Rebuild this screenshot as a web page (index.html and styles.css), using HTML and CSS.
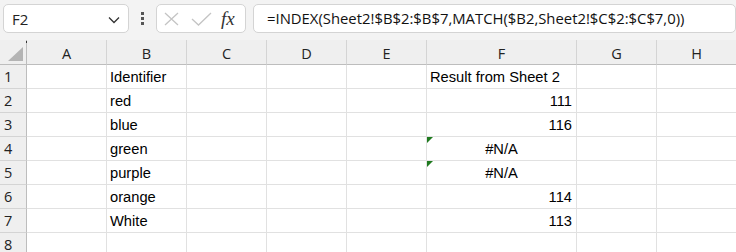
FILE: index.html
```html
<!DOCTYPE html>
<html>
<head>
<meta charset="utf-8">
<link rel="stylesheet" href="styles.css">
</head>
<body>
<div class="app">
  <div class="toolbar">
    <div class="namebox">
      <span class="name">F2</span>
      <svg class="chev" width="12" height="8" viewBox="0 0 12 8"><path d="M1 1.5 L6 6.5 L11 1.5" fill="none" stroke="#333" stroke-width="1.3"/></svg>
    </div>
    <div class="vdots"><i></i><i></i><i></i></div>
    <div class="fxbox">
      <svg width="18" height="14" viewBox="0 0 18 14"><path d="M2 1 L15 13 M15 1 L2 13" stroke="#c4c4c4" stroke-width="1.3" fill="none"/></svg>
      <svg width="22" height="14" viewBox="0 0 22 14"><path d="M1 7 L7.5 13 L20 1" stroke="#c4c4c4" stroke-width="1.3" fill="none"/></svg>
      <span class="fx">fx</span>
    </div>
    <div class="formula">=INDEX(Sheet2!$B$2:$B$7,MATCH($B2,Sheet2!$C$2:$C$7,0))</div>
  </div>
  <div class="grid">
    <div class="corner"><span class="tri"></span><span class="dot"></span></div>
    <div class="ch">A</div><div class="ch">B</div><div class="ch">C</div><div class="ch">D</div><div class="ch">E</div><div class="ch">F</div><div class="ch">G</div><div class="ch">H</div>

    <div class="rh">1</div><div class="c"></div><div class="c">Identifier</div><div class="c"></div><div class="c"></div><div class="c"></div><div class="c">Result from Sheet 2</div><div class="c"></div><div class="c"></div>
    <div class="rh">2</div><div class="c"></div><div class="c">red</div><div class="c"></div><div class="c"></div><div class="c"></div><div class="c num">111</div><div class="c"></div><div class="c"></div>
    <div class="rh">3</div><div class="c"></div><div class="c">blue</div><div class="c"></div><div class="c"></div><div class="c"></div><div class="c num">116</div><div class="c"></div><div class="c"></div>
    <div class="rh">4</div><div class="c"></div><div class="c">green</div><div class="c"></div><div class="c"></div><div class="c"></div><div class="c err"><span class="flag"></span>#N/A</div><div class="c"></div><div class="c"></div>
    <div class="rh">5</div><div class="c"></div><div class="c">purple</div><div class="c"></div><div class="c"></div><div class="c"></div><div class="c err"><span class="flag"></span>#N/A</div><div class="c"></div><div class="c"></div>
    <div class="rh">6</div><div class="c"></div><div class="c">orange</div><div class="c"></div><div class="c"></div><div class="c"></div><div class="c num">114</div><div class="c"></div><div class="c"></div>
    <div class="rh">7</div><div class="c"></div><div class="c">White</div><div class="c"></div><div class="c"></div><div class="c"></div><div class="c num">113</div><div class="c"></div><div class="c"></div>
    <div class="rh">8</div><div class="c"></div><div class="c"></div><div class="c"></div><div class="c"></div><div class="c"></div><div class="c"></div><div class="c"></div><div class="c"></div>
  </div>
</div>
</body>
</html>
```
FILE: styles.css
```css
* { box-sizing: border-box; }
html, body { margin: 0; padding: 0; }
body { width: 736px; height: 252px; overflow: hidden; background: #fff; font-family: "Open Sans", "Noto Sans", sans-serif; }
.app { width: 736px; }
.toolbar {
  height: 40px; background: #f3f3f3; display: flex; align-items: flex-start;
  padding: 4px 0 0 3px;
}
.namebox {
  width: 126px; height: 29px; background: #fff; border: 1px solid #d4d4d4; border-radius: 5px;
  display: flex; align-items: center; justify-content: space-between; padding: 0 8px 0 8px;
  font-size: 15px; color: #222;
}
.chev { margin-top: 2px; }
.vdots { width: 27px; height: 29px; display: flex; flex-direction: column; align-items: center; justify-content: center; gap: 2px; }
.vdots i { display: block; width: 3px; height: 3px; background: #555; }
.fxbox {
  width: 90px; height: 29px; background: #fff; border: 1px solid #d4d4d4; border-radius: 5px;
  display: flex; align-items: center; padding: 0 0 0 6px; gap: 10px;
}
.fx { font-family: "Liberation Serif", serif; font-style: italic; font-size: 19px; color: #333; margin-left: -2px; }
.formula {
  flex: 1; margin-left: 7px; height: 29px; background: #fff; border: 1px solid #d4d4d4; border-radius: 5px;
  font-size: 14.85px; color: #111; padding: 3px 0 0 13px; white-space: nowrap; overflow: hidden;
}
.grid {
  display: grid;
  grid-template-columns: 27px 80px 80px 80px 80px 80px 150px 80px 80px;
  grid-template-rows: 25px repeat(8, 24px);
}
.corner, .ch, .rh { background: #efefef; }
.corner { position: relative; border-right: 1px solid #bdbdbd; border-bottom: 1px solid #bdbdbd; }
.corner .tri {
  position: absolute; right: 3px; bottom: 3px; width: 0; height: 0;
  border-left: 15px solid transparent; border-bottom: 14px solid #b4b4b4;
}
.corner .dot { position: absolute; right: -1px; top: 1px; width: 1px; height: 2px; background: #333; }
.ch {
  border-right: 1px solid #d4d4d4; border-bottom: 1px solid #bdbdbd;
  display: flex; align-items: center; justify-content: center;
  font-size: 14.5px; color: #222; padding-top: 2px;
}
.rh {
  border-right: 1px solid #bdbdbd; border-bottom: 1px solid #d4d4d4;
  font-size: 14.5px; color: #222; padding: 2px 0 0 4px;
}
.c {
  border-right: 1px solid #e1e1e1; border-bottom: 1px solid #e1e1e1;
  font-family: "Liberation Sans", sans-serif; font-size: 14.7px; color: #000;
  padding: 4px 3px 0 3px; white-space: nowrap; position: relative;
}
.num { text-align: right; padding-right: 4px; }
.err { text-align: center; }
.flag {
  position: absolute; left: 0; top: 0; width: 0; height: 0;
  border-top: 6px solid #1f7a1f; border-right: 6px solid transparent;
}
```
